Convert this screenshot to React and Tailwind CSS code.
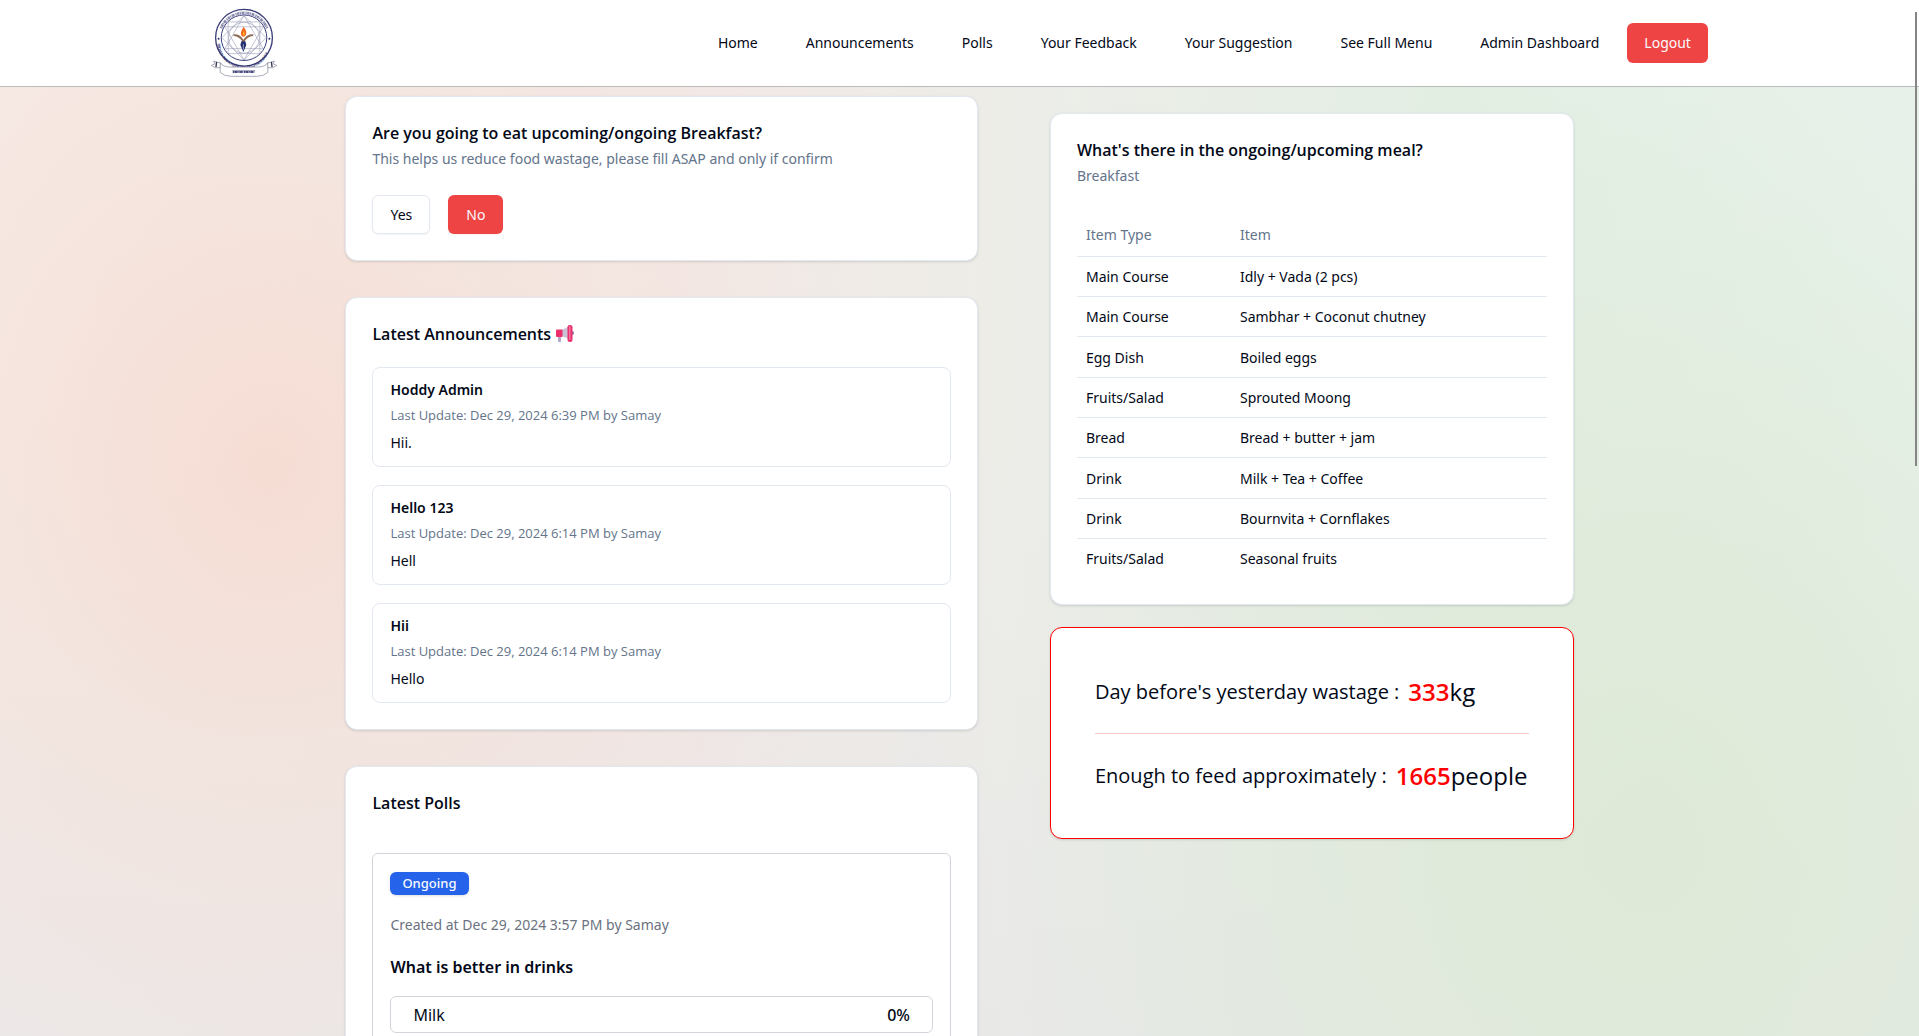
const NAV = ["Home", "Announcements", "Polls", "Your Feedback", "Your Suggestion", "See Full Menu", "Admin Dashboard"];

const ANNOUNCEMENTS = [
  { title: "Hoddy Admin", meta: "Last Update: Dec 29, 2024 6:39 PM by Samay", body: "Hii." },
  { title: "Hello 123", meta: "Last Update: Dec 29, 2024 6:14 PM by Samay", body: "Hell" },
  { title: "Hii", meta: "Last Update: Dec 29, 2024 6:14 PM by Samay", body: "Hello" },
];

const MENU = [
  ["Main Course", "Idly + Vada (2 pcs)"],
  ["Main Course", "Sambhar + Coconut chutney"],
  ["Egg Dish", "Boiled eggs"],
  ["Fruits/Salad", "Sprouted Moong"],
  ["Bread", "Bread + butter + jam"],
  ["Drink", "Milk + Tea + Coffee"],
  ["Drink", "Bournvita + Cornflakes"],
  ["Fruits/Salad", "Seasonal fruits"],
];

function Logo() {
  return (
    <svg viewBox="30 24 206 210" className="h-[70px] w-[68px]" role="img" aria-label="Institute logo">
      <g fill="none" stroke="#3a3d78">
        <circle cx="130" cy="113" r="86" strokeWidth="4" />
        <circle cx="130" cy="113" r="69" strokeWidth="3" />
        <path d="M60 84A76 76 0 0 1 200 84" strokeWidth="8" strokeDasharray="4 1.5 7 1.5 3 2 9 3" opacity=".6" />
      </g>
      <g fill="#2c2f6b">
        <circle cx="53" cy="116" r="3" />
        <circle cx="207" cy="116" r="3" />
      </g>
      <defs>
        <path id="ring" d="M49 126A81 81 0 0 0 211 126" />
      </defs>
      <text fontSize="12" fontWeight="700" fill="#2c2f6b" fontFamily="Liberation Sans, sans-serif">
        <textPath href="#ring" startOffset="2%">INDIAN INSTITUTE OF TECHNOLOGY</textPath>
      </text>
      <g fill="none" stroke="#8a90ae" strokeWidth="1.6">
        <circle cx="130" cy="113" r="47" />
        <path d="M130 46L188 146H72Z" />
        <path d="M130 180L72 80H188Z" />
        <path d="M82 65H178V161H82Z" />
        <path d="M130 46L197 113L130 180L63 113Z" />
      </g>
      <path d="M97 103Q116 100 128 119Q142 100 159 103L157 108Q140 110 131 126H126Q116 110 99 108Z" fill="#8d6d55" />
      <path d="M129 80Q142 98 134 107Q128 113 122 106Q117 98 129 80Z" fill="#f26a1b" />
      <path d="M129 93Q134 102 130 108Q125 105 129 93Z" fill="#fbc02d" />
      <path d="M122 124H134L137 135L128 156L119 135Z" fill="#25306f" />
      <path d="M128 132V150" stroke="#c9cde4" strokeWidth="2" />
      <g fill="#fff" stroke="#6f7288" strokeWidth="1.8">
        <path d="M60 190L38 184L42 192L31 197L44 204L58 204Z" />
        <path d="M200 190L222 184L218 192L229 197L216 204L202 204Z" />
        <path d="M58 189Q66 202 92 202H168Q194 202 202 189V218Q190 230 168 230H92Q70 230 58 218Z" />
      </g>
      <path d="M47 186L45 202M213 186L215 202" stroke="#33364f" strokeWidth="4" />
      <path d="M96 217H163" stroke="#2c2f6b" strokeWidth="6" strokeDasharray="5 1 9 2 4 1 8 3" opacity=".85" />
      <path d="M95 213H164" stroke="#2c2f6b" strokeWidth="1.6" />
    </svg>
  );
}

function Megaphone() {
  return (
    <svg viewBox="0 0 20 18" className="h-[18px] w-5" aria-hidden="true">
      <path d="M3 9H6V16.5Q4.500 17.500 3 16.500Z" fill="#b4a7c9" />
      <path d="M7 4.500Q11 4 14 1V14Q11 12 7 11.500Z" fill="#c9c1d6" />
      <rect x="1" y="4.500" width="6.500" height="7.500" rx="1" fill="#ec2f6b" />
      <ellipse cx="17.500" cy="8" rx="1.500" ry="2" fill="#8f7ba8" />
      <rect x="12.500" y="0" width="5" height="17" rx="2.200" fill="#e8336f" />
      <rect x="14" y="1" width="1.500" height="14" rx=".7" fill="#f7709a" />
    </svg>
  );
}

function Card({ children }) {
  return <section className="rounded-xl border border-[#e2e8f0] bg-white px-[26px] pt-[27px] pb-[26px] shadow-sm">{children}</section>;
}

function CardTitle({ children }) {
  return <h2 className="flex items-center gap-1 font-['Open_Sans',sans-serif] text-base leading-[18px] font-semibold">{children}</h2>;
}

export default function App() {
  return (
    <div className="relative flex h-screen flex-col overflow-hidden bg-[radial-gradient(ellipse_30%_62%_at_14%_45%,rgba(246,214,202,0.65),rgba(245,222,211,0.4)_45%,transparent),radial-gradient(ellipse_34%_75%_at_86%_82%,rgba(220,233,211,0.85),rgba(222,234,215,0.5)_50%,transparent),linear-gradient(180deg,transparent_40%,rgba(230,230,232,0.6)),linear-gradient(90deg,#f6eae6,#f3e8e5_35%,#ecede8_54%,#e3eee3_75%,#e7f1e9)] font-['Noto_Sans','Open_Sans',sans-serif] text-sm text-[#020817]">
      <header className="flex h-[87px] shrink-0 items-center justify-between border-b border-[#bababa] bg-white px-[11%]">
        <a href="#home"><Logo /></a>
        <nav className="flex items-center gap-7">
          <div className="flex items-center gap-12 whitespace-nowrap">
            {NAV.map((label) => (
              <a key={label} href="#nav">{label}</a>
            ))}
          </div>
          <button type="button" className="h-10 rounded-md bg-[#ef4444] px-[17px] text-[#f8fafc]">Logout</button>
        </nav>
      </header>

      <main className="mx-auto grid w-[64%] grid-cols-[633fr_524fr] items-start gap-[72px] pt-[9px]">
        <div className="flex min-w-0 flex-col gap-9">
          <Card>
            <CardTitle>Are you going to eat upcoming/ongoing Breakfast?</CardTitle>
            <p className="mt-[6px] leading-[22px] text-[#64748b]">This helps us reduce food wastage, please fill ASAP and only if confirm</p>
            <div className="mt-[25px] flex gap-[18px]">
              <button type="button" className="h-[39px] rounded-md border border-[#e2e8f0] bg-white px-[17px] shadow-xs">Yes</button>
              <button type="button" className="h-[39px] rounded-md bg-[#ef4444] px-[18px] text-[#f8fafc] shadow-xs">No</button>
            </div>
          </Card>

          <Card>
            <CardTitle>Latest Announcements <Megaphone /></CardTitle>
            <div className="mt-6 flex flex-col gap-[18px]">
              {ANNOUNCEMENTS.map((a) => (
                <article key={a.title} className="rounded-lg border border-[#e2e8f0] px-[17px] pt-[11px] pb-3">
                  <h3 className="leading-[22px] font-semibold">{a.title}</h3>
                  <p className="mt-1 font-['Open_Sans',sans-serif] text-[13px] leading-5 text-[#64748b]">{a.meta}</p>
                  <p className="mt-[7px] leading-[22px]">{a.body}</p>
                </article>
              ))}
            </div>
          </Card>

          <Card>
            <CardTitle>Latest Polls</CardTitle>
            <div className="mt-[41px] rounded-md border border-[#d1d5db] px-[17px] py-[18px]">
              <span className="flex h-[23px] w-fit items-center rounded-md bg-[#2563eb] px-3 text-[13px] font-medium text-[#f8fafc] shadow-sm">Ongoing</span>
              <p className="mt-[19px] leading-[22px] text-[#6b7280]">Created at Dec 29, 2024 3:57 PM by Samay</p>
              <h3 className="mt-[19px] text-base leading-6 font-semibold">What is better in drinks</h3>
              <div className="mt-[17px] flex h-[37px] items-center justify-between rounded-md border border-[#d1d5db] px-[22px] text-base">
                <span>Milk</span>
                <span className="font-medium">0%</span>
              </div>
            </div>
          </Card>
        </div>

        <div className="mt-[17px] flex min-w-0 flex-col gap-[22px]">
          <Card>
            <CardTitle>What's there in the ongoing/upcoming meal?</CardTitle>
            <p className="mt-[6px] leading-[22px] text-[#64748b]">Breakfast</p>
            <table className="mt-[25px] w-full text-left">
              <thead>
                <tr className="h-11 border-b border-[#e2e8f0] text-[#64748b]">
                  <th className="w-[154px] px-[9px] pt-[2px] font-normal">Item Type</th>
                  <th className="px-[9px] pt-[2px] font-normal">Item</th>
                </tr>
              </thead>
              <tbody>
                {MENU.map(([type, item]) => (
                  <tr key={item} className="h-10 border-b border-[#e2e8f0] last:border-0 nth-[3n]:h-[41px]">
                    <td className="px-[9px] pt-[2px]">{type}</td>
                    <td className="px-[9px] pt-[2px]">{item}</td>
                  </tr>
                ))}
              </tbody>
            </table>
          </Card>

          <section className="rounded-xl border border-[#ff0000] bg-white px-11 pt-11 pb-[42px] font-['Open_Sans',sans-serif] whitespace-nowrap shadow-sm">
            <p className="flex h-[62px] items-start gap-[9px] border-b border-[#ffc9c9] text-xl leading-10">
              Day before's yesterday wastage :
              <span className="text-2xl leading-10"><b className="font-semibold text-[#ff0000]">333</b>kg</span>
            </p>
            <p className="flex items-start gap-[9px] pt-[22px] text-xl leading-10">
              Enough to feed approximately :
              <span className="text-2xl leading-10"><b className="font-semibold text-[#ff0000]">1665</b>people</span>
            </p>
          </section>
        </div>
      </main>

      <div className="absolute top-3 right-[2px] h-[454px] w-[2px] bg-[#858585]" aria-hidden="true" />
    </div>
  );
}
